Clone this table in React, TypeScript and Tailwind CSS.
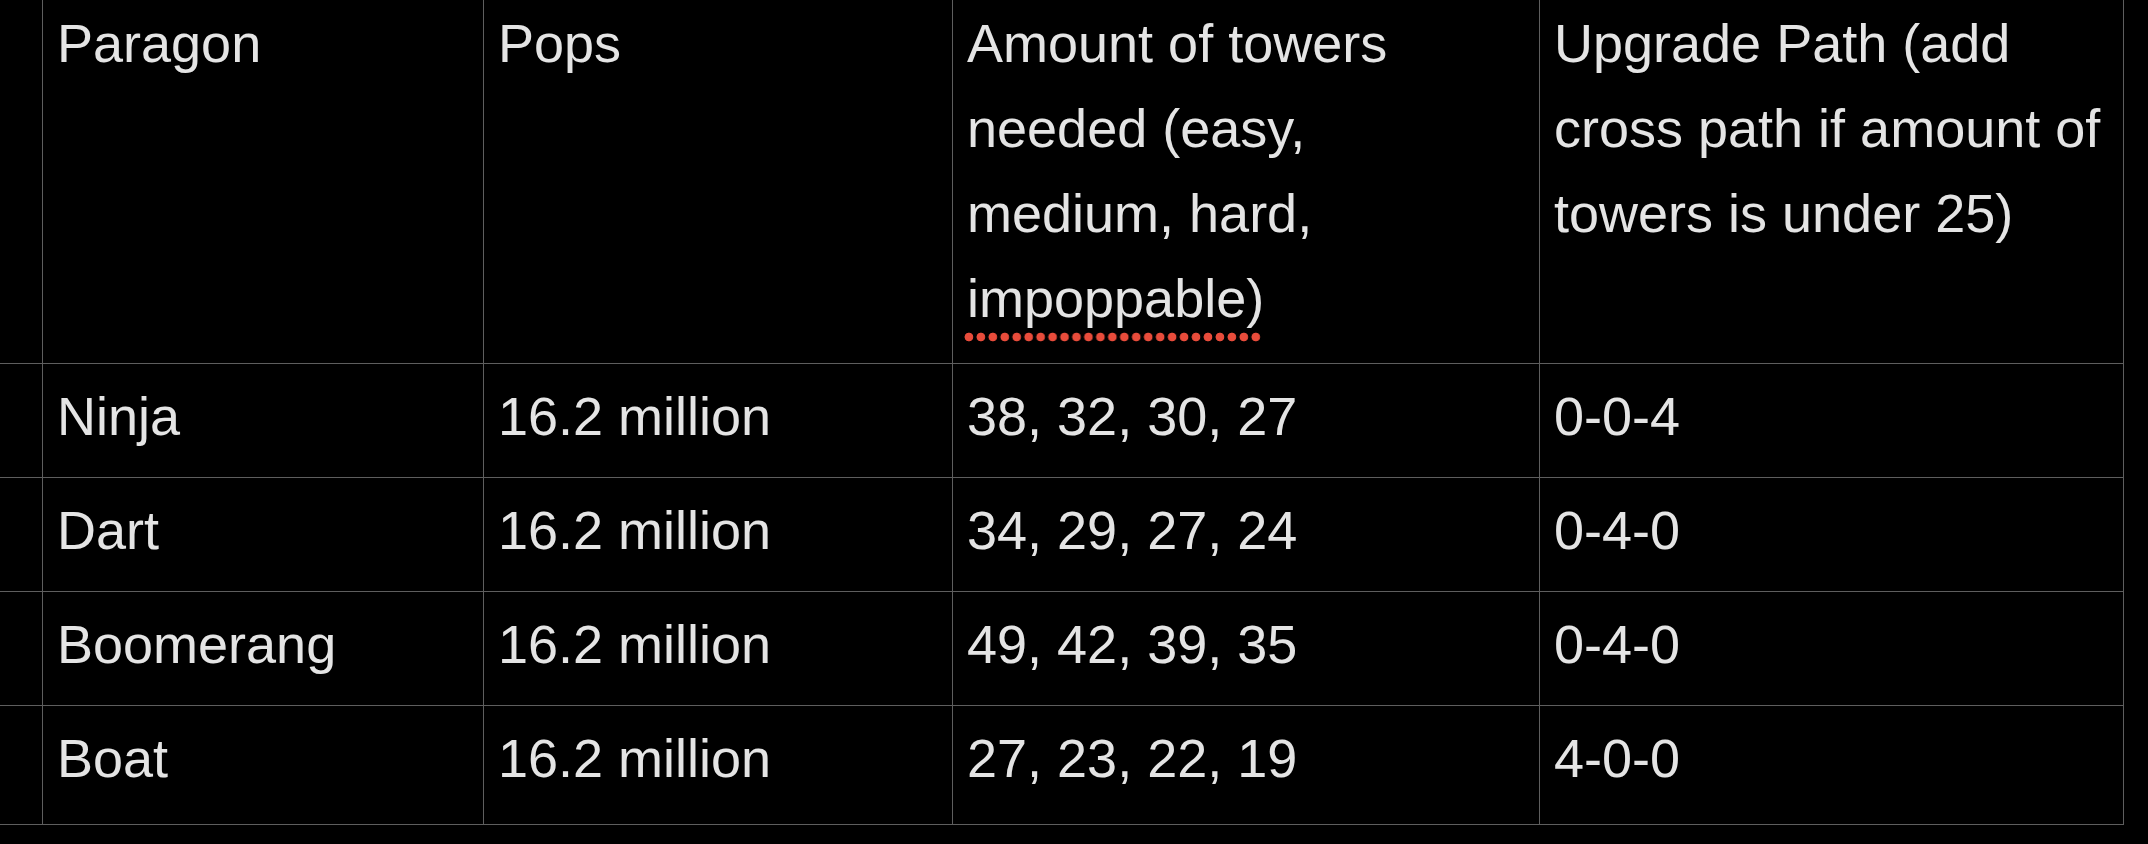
const ROWS = [
  { name: "Ninja", pops: "16.2 million", towers: "38, 32, 30, 27", path: "0-0-4" },
  { name: "Dart", pops: "16.2 million", towers: "34, 29, 27, 24", path: "0-4-0" },
  { name: "Boomerang", pops: "16.2 million", towers: "49, 42, 39, 35", path: "0-4-0" },
  { name: "Boat", pops: "16.2 million", towers: "27, 23, 22, 19", path: "4-0-0" },
];

const cell = "border-r border-b border-[#5e5e5e] pl-[14px] pr-[14px] pt-[10px]";

export default function App() {
  return (
    <div
      className="w-[2148px] h-[844px] overflow-hidden bg-black text-[#e4e4e4] text-[54px] leading-[85px]"
      style={{ fontFamily: '"Liberation Sans", Arial, sans-serif' }}
    >
      <div className="mt-[-9px] grid w-[2124px] grid-cols-[43px_441px_469px_587px_584px]">
        {/* header */}
        <div className="border-r border-b border-[#5e5e5e]" />
        <div className={`${cell} pb-[22px]`}>Paragon</div>
        <div className={`${cell} pb-[22px]`}>Pops</div>
        <div className={`${cell} pb-[22px]`}>
          Amount of towers needed (easy, medium, hard,{" "}
          <span className="bg-[radial-gradient(circle,#e84c3b_4px,transparent_4.7px)] bg-[length:11.8px_10px] [background-repeat:space_no-repeat] bg-[position:0_100%] pb-[14px] pl-[4px] ml-[-4px] pr-[16px] mr-[-16px]">
            impoppable
          </span>
          )
        </div>
        <div className={`${cell} pb-[22px]`}>
          Upgrade Path (add cross path if amount of towers is under 25)
        </div>

        {/* rows */}
        {ROWS.map((r, i) => {
          const pb = i === ROWS.length - 1 ? "pb-[23px]" : "pb-[18px]";
          return [
            <div key={r.name + "-0"} className="border-r border-b border-[#5e5e5e]" />,
            <div key={r.name + "-1"} className={`${cell} ${pb}`}>{r.name}</div>,
            <div key={r.name + "-2"} className={`${cell} ${pb}`}>{r.pops}</div>,
            <div key={r.name + "-3"} className={`${cell} ${pb}`}>{r.towers}</div>,
            <div key={r.name + "-4"} className={`${cell} ${pb}`}>{r.path}</div>,
          ];
        })}
      </div>
    </div>
  );
}
